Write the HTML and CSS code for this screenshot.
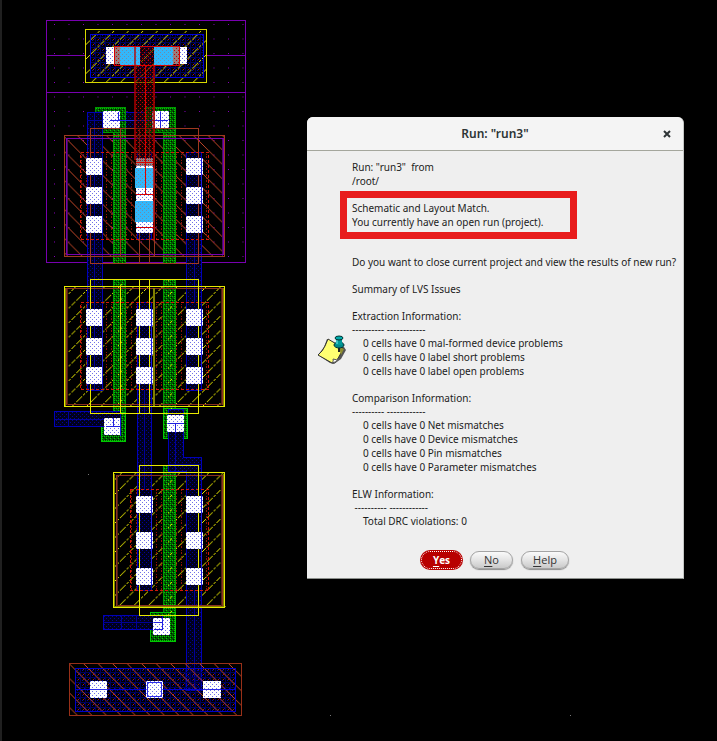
FILE: index.html
```html
<!DOCTYPE html>
<html lang="en">
<head>
<meta charset="utf-8">
<meta name="viewport" content="width=device-width, initial-scale=1">
<title>Run: "run3"</title>
<link rel="stylesheet" href="styles.css">
</head>
<body>
<main class="desktop">
<svg class="layout" role="img" aria-label="Cell layout" shape-rendering="crispEdges">
<defs>
<pattern id="grid" x="54" y="24" width="14.5" height="14.5" patternUnits="userSpaceOnUse"><rect width="1" height="1" fill="#8a00c0"/></pattern>
<pattern id="blue" width="4" height="4" patternUnits="userSpaceOnUse"><rect width="4" height="4" fill="#00001c"/><path d="M0 0h1v1H0zM2 2h1v1H2z" fill="#000098"/></pattern>
<pattern id="well" width="5" height="5" patternUnits="userSpaceOnUse"><path d="M0 0h1v5H0zM0 2h5v1H0z" fill="#000058"/><path d="M2 0h1v1H2zM4 3h1v1H4z" fill="#0000b0"/><path d="M3 4h1v1H3z" fill="#a01818"/></pattern>
<pattern id="green" width="4" height="4" patternUnits="userSpaceOnUse"><rect width="4" height="4" fill="#005500"/><path d="M0 0h1v1H0zM2 2h1v1H2zM2 0h1v1H2z" fill="#00c800"/><path d="M1 3h1v1H1zM3 1h1v1H3z" fill="#001000"/></pattern>
<pattern id="red" width="4" height="4" patternUnits="userSpaceOnUse"><rect width="4" height="4" fill="#300000" fill-opacity=".5"/><path d="M0 0h1v1H0zM2 2h1v1H2z" fill="#c80000"/></pattern>
<pattern id="diff" width="5" height="6" patternUnits="userSpaceOnUse"><path d="M1 0h1v2H1zM1 4h1v1H1z" fill="#8c1408"/></pattern>
<pattern id="cut" width="4" height="4" patternUnits="userSpaceOnUse"><rect width="4" height="4" fill="#fff"/><path d="M0 0h1v1H0zM2 2h1v1H2z" fill="#7070e8"/></pattern>
<pattern id="via" width="4" height="4" patternUnits="userSpaceOnUse"><rect width="4" height="4" fill="#32b7fb"/><path d="M0 0h1v1H0zM2 2h1v1H2z" fill="#708ca8"/></pattern>
<pattern id="yhatch" width="14.5" height="14.5" patternUnits="userSpaceOnUse"><path d="M-1 15.500L15.500 -1" stroke="#f0f000" stroke-width="1.200" stroke-dasharray="5 2 2 1"/></pattern>
<pattern id="bhatch" width="14.5" height="14.5" patternUnits="userSpaceOnUse"><path d="M-1 -1L15.500 15.500" stroke="#c84828" stroke-width="1.200"/></pattern>
<rect id="c" width="17" height="17" fill="url(#cut)"/>
</defs>

<!-- n-well -->
<rect x="47" y="21" width="198" height="241" fill="url(#grid)"/>
<g transform="translate(.5 .5)" fill="none" stroke="#7800b0"><rect x="46" y="20" width="199" height="242"/><path d="M46 55H245M46 92H245"/></g>

<!-- well tap -->
<rect x="86" y="30" width="121" height="53" fill="#000"/>
<rect x="90" y="35" width="113" height="43" fill="url(#well)"/>
<rect x="86" y="30" width="121" height="53" fill="url(#yhatch)"/>
<g transform="translate(.5 .5)" fill="none"><path d="M86 82H206M206 29V82" stroke="#808000"/><rect x="85" y="29" width="121" height="53" stroke="#d8d800"/><rect x="90" y="34" width="113" height="43" stroke="#0000d8"/></g>
<path d="M106 47h14v17h-14zM173 47h14v17h-14z" fill="url(#cut)"/>

<!-- upper metal -->
<g fill="url(#blue)" stroke="#0000c0"><path d="M87.500 112.500H170.500V128.500H87.500z"/></g>

<!-- device hatching -->
<rect x="65" y="136" width="160" height="121" fill="url(#bhatch)"/>
<rect x="81" y="152" width="128" height="87" fill="url(#diff)"/>
<rect x="65" y="287" width="160" height="119" fill="url(#yhatch)"/>
<rect x="81" y="302" width="128" height="87" fill="url(#diff)"/>
<rect x="114" y="473" width="111" height="135" fill="url(#yhatch)"/>
<rect x="131" y="490" width="78" height="101" fill="url(#diff)"/>

<!-- gates -->
<g fill="url(#green)" stroke="#009800">
<path d="M95.500 107.500H125.500V132.500H95.500z"/><path d="M145.500 107.500H175.500V132.500H145.500z"/>
<path d="M113.500 132.500H125.500V263.500H113.500zM163.500 132.500H175.500V263.500H163.500z"/>
<path d="M113.500 279.500H125.500V413.500H113.500zM163.500 279.500H175.500V413.500H163.500z"/>
<path d="M163.500 465.500H175.500V615.500H163.500z"/>
<g stroke="#00c800"><path d="M101.500 412.500H125.500V441.500H101.500zM163.500 408.500H187.500V438.500H163.500zM150.500 612.500H175.500V641.500H150.500z"/></g>
</g>
<path d="M118 279h4v134h-4zM168 279h4v134h-4zM168 465h4v150h-4z" fill="url(#yhatch)"/>

<!-- metal straps -->
<g fill="url(#blue)" stroke="#0000b8">
<path d="M87.500 112.500H102.500V390.500H87.500zM186.500 152.500H201.500V390.500H186.500z"/>
<path d="M137.500 152.500H151.500V239.500H137.500zM137.500 302.500H151.500V590.500H137.500z"/>
<path d="M54.500 411.500H120.500V426.500H54.500z"/>
<path d="M103.500 615.500H162.500V629.500H103.500z"/>
<path d="M168.500 409.500H183.500V457.500H201.500V690.500H186.500V471.500H168.500z"/>
</g>
<path d="M94.500 112V390M194.500 240V302M144.500 390V490M54 419.500H120M68.500 411V427M103 622.500H162M121.500 615V630M136.500 615V630M175.500 432V471M168 464.500H202M194.500 591V690M87 120.500H170M186 256.500H202" fill="none" stroke="#000098"/>

<!-- device outlines -->
<g transform="translate(.5 .5)" fill="none">
<path d="M67 138V255M222 138V255" stroke="#481060"/>
<rect x="66" y="138" width="157" height="116" stroke="#7800b0"/>
<rect x="64" y="135" width="160" height="121" stroke="#a03820"/>
<rect x="90" y="128" width="108" height="135" stroke="#a03820"/>
<path d="M120 128V255M139 128V263M149 128V263M154 150V255" stroke="#983820"/>
<g stroke="#d01808" stroke-dasharray="3 2"><rect x="80" y="152" width="128" height="87"/><rect x="80" y="302" width="128" height="87"/><rect x="130" y="489" width="78" height="101"/></g>
<g stroke="#8c3020"><rect x="66" y="288" width="156" height="116"/><rect x="116" y="475" width="106" height="130"/></g>
<path d="M67 288V404M221 288V404M117 475V605M221 475V605" stroke="#502018"/>
<path d="M154 287V405M153 287V405M223 287V406M65 287V406M114 473V607M223 473V607M114 606H225" stroke="#808000"/>
<g stroke="#e8e800"><rect x="64" y="286" width="160" height="120"/><rect x="90" y="279" width="108" height="134"/><path d="M120 286V413M139 279V413M149 279V413"/><rect x="113" y="472" width="111" height="135"/><rect x="139" y="465" width="59" height="150"/></g>
</g>

<!-- contacts -->
<g>
<use href="#c" x="103" y="111"/><use href="#c" x="152" y="111"/>
<use href="#c" x="86" y="158"/><use href="#c" x="86" y="187"/><use href="#c" x="86" y="216"/>
<use href="#c" x="136" y="158"/><use href="#c" x="136" y="187"/><use href="#c" x="136" y="216"/>
<use href="#c" x="186" y="158"/><use href="#c" x="186" y="187"/><use href="#c" x="186" y="216"/>
<use href="#c" x="86" y="309"/><use href="#c" x="86" y="338"/><use href="#c" x="86" y="367"/>
<use href="#c" x="136" y="309"/><use href="#c" x="136" y="338"/><use href="#c" x="136" y="367"/>
<use href="#c" x="186" y="309"/><use href="#c" x="186" y="338"/><use href="#c" x="186" y="367"/>
<use href="#c" x="104" y="418"/><use href="#c" x="167" y="415"/>
<use href="#c" x="136" y="496"/><use href="#c" x="136" y="532"/><use href="#c" x="136" y="568"/>
<use href="#c" x="186" y="496"/><use href="#c" x="186" y="532"/><use href="#c" x="186" y="568"/>
<use href="#c" x="153" y="618"/>
</g>
<g fill="none" stroke="#2020e0"><path d="M102.500 158V233M102.500 309V384M201.500 158V233M201.500 309V384M201.500 496V585M151.500 309V384M151.500 496V585"/><path d="M110 120.500H168M118.500 112V120M160.500 112V128M106 426.500H121M113.500 418V426M120.500 418V436M168 423.500H184M175.500 423V433M154 629.500H162.500V618M154 622.500H162"/></g>

<!-- second metal -->
<path d="M114 47h6v18h-6zM173 47h6v18h-6zM140 47h14v18h-14zM135 65h20v101h-20z" fill="url(#red)"/>
<path d="M120 47h20v18h-20zM154 47h19v18h-19zM135 168h19v20h-19zM135 201h19v21h-19z" fill="url(#via)"/>
<g fill="none"><path d="M114.500 46.500H179.500V65.500H114.500zM145.500 66V194M136 162.500H154M136 194.500H154M136 227.500H154" stroke="#d80000"/><path d="M135 47V160M154 66V240" stroke="#b80000" stroke-width="2" stroke-opacity=".7"/></g>

<!-- substrate tap -->
<rect x="75" y="668" width="161" height="44" fill="url(#well)"/>
<rect x="70" y="664" width="172" height="52" fill="url(#bhatch)"/>
<g transform="translate(.5 .5)" fill="none"><rect x="69" y="663" width="172" height="52" stroke="#983018"/><rect x="75" y="668" width="160" height="43" stroke="#0000c8"/><path d="M75 689H235" stroke="#0000d0"/></g>
<use href="#c" x="90" y="681"/><use href="#c" x="146" y="681"/><rect x="203" y="681" width="18" height="17" fill="url(#cut)"/>
<path d="M90 689.500H108M203 689.500H221M147.500 682.500H161.500V696.500H147.500z" fill="none" stroke="#3030e8"/>
<path d="M88 474h1v1h-1zM330 715h1v1h-1zM570 715h1v1h-1z" fill="#777"/>
</svg>

<section class="dialog" role="dialog" aria-labelledby="dialog-title">
<header class="titlebar">
<h1 class="title" id="dialog-title">Run: "run3"</h1>
<button class="close" type="button" aria-label="Close"><svg width="8" height="8" viewBox="0 0 8 8"><path d="M1 1l6 6M7 1l-6 6" stroke="#2e3436" stroke-width="2"/></svg></button>
</header>
<div class="content">
<svg class="note" width="30" height="30" viewBox="0 0 30 30" aria-hidden="true">
<path d="M10 4l17 8 2 3-5 9-7 5-4-1L1 20 7 12z" fill="#555"/>
<path d="M11 4l15 9-2 5-5 9-4 1L1 20q5-4 7-9z" fill="#ffff72" stroke="#333"/>
<path d="M15 28q2-2 1-4 4 2 6-1-3 5-7 5z" fill="#fff" stroke="#555"/>
<path d="M22 12l5 2-3 6z" fill="#8c8c30"/>
<path d="M22 13v4" stroke="#222" stroke-width="2"/>
<ellipse cx="22" cy="10" rx="5" ry="3" fill="#088" stroke="#033"/>
<path d="M19 4h6v6h-6z" fill="#099"/><path d="M20 5v4" stroke="#7ee"/>
<ellipse cx="22" cy="3" rx="4" ry="2" fill="#0aa" stroke="#033"/>
</svg>
<div class="report">
<p>Run: "run3"&nbsp; from<br>/root/</p>
<p class="highlight">Schematic and Layout Match.<br>You currently have an open run (project).</p>
<p class="question">Do you want to close current project and view the results of new run?</p>
<p class="block">Summary of LVS Issues</p>
<div class="block"><p>Extraction Information:</p><p class="rule">---------- ------------</p>
<ul><li>0 cells have 0 mal-formed device problems</li><li>0 cells have 0 label short problems</li><li>0 cells have 0 label open problems</li></ul></div>
<div class="block"><p>Comparison Information:</p><p class="rule">---------- ------------</p>
<ul><li>0 cells have 0 Net mismatches</li><li>0 cells have 0 Device mismatches</li><li>0 cells have 0 Pin mismatches</li><li>0 cells have 0 Parameter mismatches</li></ul></div>
<div class="block"><p>ELW Information:</p><p class="rule">&nbsp;---------- ------------</p>
<ul><li>Total DRC violations: 0</li></ul></div>
</div>
</div>
<footer class="actions">
<button class="button primary" type="button"><u>Y</u>es</button>
<button class="button" type="button"><u>N</u>o</button>
<button class="button wide" type="button"><u>H</u>elp</button>
</footer>
</section>
</main>
</body>
</html>
```
FILE: styles.css
```css
* { box-sizing: border-box; }
body {
  margin: 0;
  background: #000;
  color: #1c1c1c;
  font: 10px/14px "Noto Sans", "Open Sans", sans-serif;
}
p, ul, h1 { margin: 0; padding: 0; }
.desktop {
  position: relative;
  min-height: 100vh;
  padding: 117px 33px 0 305px;
  border-left: 2px solid #202020;
}
.layout {
  position: absolute;
  top: 0;
  left: -2px;
  width: 100%;
  height: 100%;
}
.dialog {
  position: relative;
  background: #efefef;
  border-radius: 6px 6px 0 0;
  border-right: 1px solid #c4c6c4;
  border-bottom: 1px solid #8c908c;
}
.titlebar {
  display: grid;
  grid-template-columns: 32px 1fr 32px;
  align-items: center;
  height: 34px;
  background: #f4f4f4;
  border-bottom: 1px solid #a4a69c;
  border-radius: 6px 6px 0 0;
}
.title {
  grid-column: 2;
  text-align: center;
  font-size: 12px;
  font-weight: 600;
  color: #2e3436;
}
.close {
  display: flex;
  justify-content: center;
  padding: 8px 0;
  border: 0;
  background: none;
}
.content {
  display: grid;
  grid-template-columns: 30px 1fr;
  column-gap: 5px;
  padding: 9px 0 0 10px;
}
.note { align-self: center; margin-top: 12px; }
.report { white-space: nowrap; }
.highlight {
  width: 237px;
  margin: 3px 0 0 -12px;
  padding: 3px 5px;
  border: 7px solid #e81c1c;
}
.question { margin-top: 16px; }
.block { margin-top: 13px; }
.rule { line-height: 13px; }
ul { list-style: none; padding-left: 11px; }
.actions {
  display: flex;
  justify-content: center;
  gap: 8px;
  padding: 23px 0 9px;
}
.button {
  min-width: 43px;
  height: 18px;
  padding: 0 8px;
  border: 1px solid #a4a4a4;
  border-radius: 9px;
  background: linear-gradient(#fafafa, #e4e4e4 50%, #cacaca);
  box-shadow: 0 1px 1px #8c8c8c;
  color: #333;
  font: 11px/14px "Open Sans", "Noto Sans", sans-serif;
}
.wide { min-width: 48px; }
.button u { text-underline-offset: 2px; }
.primary {
  min-width: 41px;
  border: 1px dotted #fff;
  background: #b80000;
  box-shadow: 0 0 0 1px #b80000;
  color: #fff;
  font-size: 10px;
  font-weight: 700;
}
```
